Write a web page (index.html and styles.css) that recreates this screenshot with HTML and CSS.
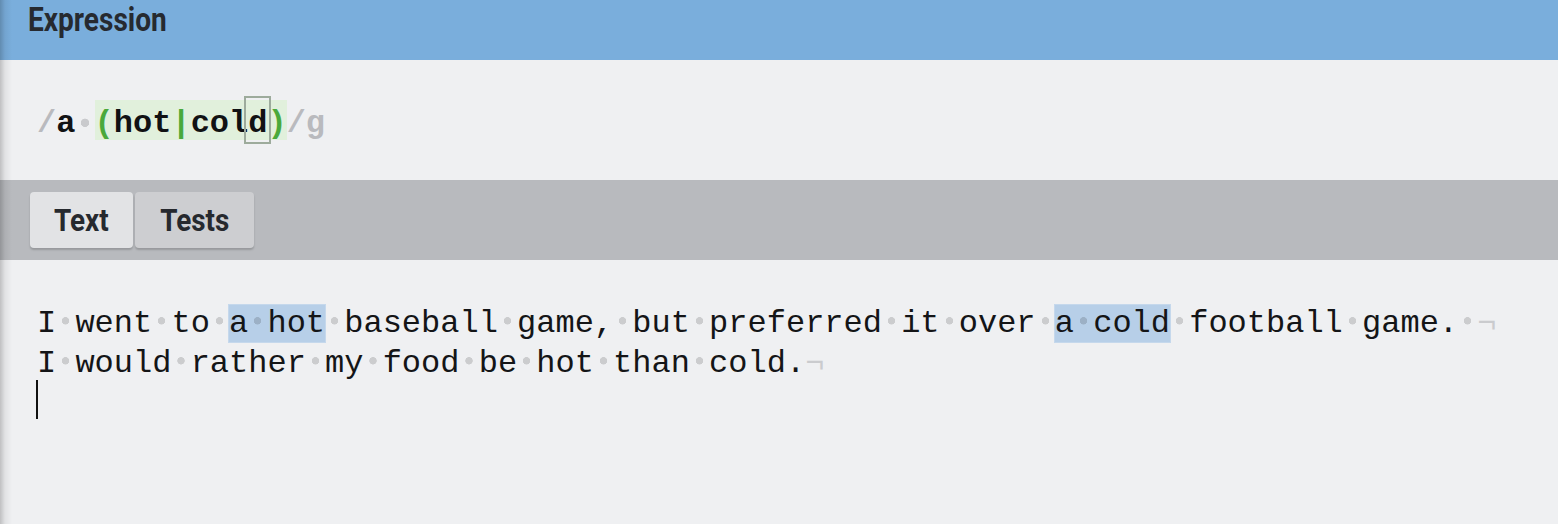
FILE: index.html
```html
<!DOCTYPE html>
<html lang="en">
<head>
<meta charset="utf-8">
<title>Expression</title>
<link rel="stylesheet" href="styles.css">
</head>
<body>
<div class="app">
  <header class="panel-head">
    <h1 class="title"><span class="cond">Expression</span></h1>
  </header>
  <section class="expr">
    <div class="expr-line"><span class="delim">/</span>a<span class="s"> </span><span class="group"><span class="paren">(</span>hot<span class="alt">|</span>col<span class="sel">d</span><span class="paren">)</span></span><span class="delim">/g</span></div>
  </section>
  <nav class="tabbar">
    <button class="tab active"><span class="cond">Text</span></button>
    <button class="tab"><span class="cond">Tests</span></button>
  </nav>
  <section class="editor">
    <div class="line">I<span class="s"> </span>went<span class="s"> </span>to<span class="s"> </span><span class="match">a<span class="s"> </span>hot</span><span class="s"> </span>baseball<span class="s"> </span>game,<span class="s"> </span>but<span class="s"> </span>preferred<span class="s"> </span>it<span class="s"> </span>over<span class="s"> </span><span class="match">a<span class="s"> </span>cold</span><span class="s"> </span>football<span class="s"> </span>game.<span class="s"> </span><span class="eol">¬</span></div>
    <div class="line">I<span class="s"> </span>would<span class="s"> </span>rather<span class="s"> </span>my<span class="s"> </span>food<span class="s"> </span>be<span class="s"> </span>hot<span class="s"> </span>than<span class="s"> </span>cold.<span class="eol">¬</span></div>
    <div class="line"><span class="caret"></span></div>
  </section>
</div>
</body>
</html>
```

FILE: styles.css
```css
* { box-sizing: border-box; }

html, body {
  margin: 0;
  padding: 0;
  height: 100%;
}

body {
  background: #eff0f2;
  font-family: "Roboto", "Liberation Sans", sans-serif;
}

.app {
  --edge: linear-gradient(to right, rgba(0, 0, 0, 0.2), rgba(0, 0, 0, 0.06) 5px, rgba(0, 0, 0, 0) 12px);
  display: flex;
  flex-direction: column;
  height: 524px;
}

.cond {
  display: inline-block;
  transform: scaleX(0.87);
  transform-origin: center;
}

/* header */
.panel-head {
  height: 60px;
  flex: none;
  background: var(--edge), #7aaedc;
  padding: 0 0 0 28px;
}

.title {
  margin: 0;
  font-size: 33px;
  font-weight: 700;
  line-height: 40px;
  color: #262a30;
}

.title .cond {
  transform: scaleX(0.85);
  transform-origin: left center;
}

/* expression */
.expr {
  height: 120px;
  flex: none;
  background: var(--edge), #eff0f2;
  padding: 40px 0 0 37px;
}

.expr-line {
  font-family: "Liberation Mono", "DejaVu Sans Mono", monospace;
  font-weight: 700;
  font-size: 32px;
  line-height: 47px;
  height: 40px;
  white-space: pre;
  color: #111214;
}

.delim { color: #b9babe; }

.expr-line .s {
  background: radial-gradient(circle at 50% 57%, #c9cacd 3.9px, rgba(201, 202, 205, 0) 4.5px);
}

.group {
  display: inline-block;
  vertical-align: top;
  background: #e1f0dc;
  height: 40px;
}

.paren, .alt { color: #4aa93a; }

.sel {
  display: inline-block;
  vertical-align: top;
  height: 40px;
  outline: 2px solid #9dab9c;
  outline-offset: 2px;
}

/* tabs */
.tabbar {
  height: 80px;
  flex: none;
  background: var(--edge), #b8babe;
  padding: 12px 30px;
  display: flex;
  gap: 2px;
}

.tab {
  border: none;
  margin: 0;
  height: 56px;
  padding: 0 20px;
  border-radius: 4px;
  background: #cdced1;
  box-shadow: 0 2px 2px rgba(0, 0, 0, 0.18);
  font-family: "Roboto", "Liberation Sans", sans-serif;
  font-size: 32px;
  font-weight: 700;
  color: #26292e;
  line-height: 56px;
}

.tab.active {
  background: #e2e3e5;
}

/* editor */
.editor {
  flex: 1;
  background: var(--edge), #eff0f2;
  padding: 40px 0 0 37px;
}

.line {
  font-family: "Liberation Mono", "DejaVu Sans Mono", monospace;
  font-size: 32px;
  line-height: 47px;
  height: 40px;
  white-space: pre;
  color: #141517;
}

.s {
  display: inline-block;
  width: 1ch;
  height: 40px;
  vertical-align: top;
  background: radial-gradient(circle at 50% 52%, rgba(0, 0, 0, 0.15) 3.4px, rgba(0, 0, 0, 0) 4px);
}

.match {
  background: #b7cfe8;
  box-shadow: 0 0 0 1px #c5d8ec;
}

.eol {
  color: #cacbce;
}

.caret {
  display: inline-block;
  width: 2px;
  height: 39px;
  margin-left: -1px;
  vertical-align: top;
  background: #111;
}
```
